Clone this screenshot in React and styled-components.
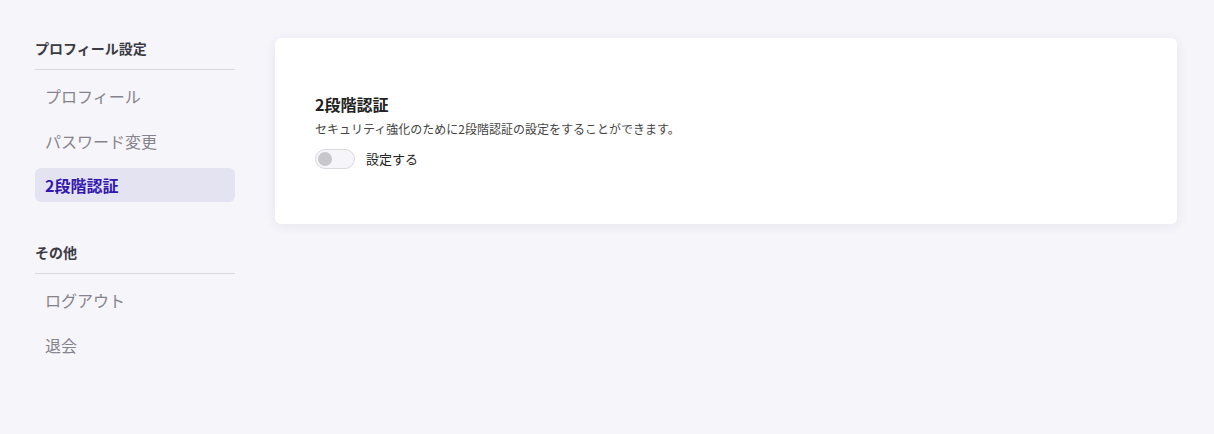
import { useState } from 'react';
import styled, { createGlobalStyle } from 'styled-components';

const GlobalStyle = createGlobalStyle`
    html, body {
        margin: 0;
        padding: 0;
        background: #f6f5fa;
        font-family: "Noto Sans CJK JP", "Noto Sans", sans-serif;
    }
`

const menu = [
    {
        title: 'プロフィール設定',
        items: ['プロフィール', 'パスワード変更', '2段階認証'],
    },
    {
        title: 'その他',
        items: ['ログアウト', '退会'],
    },
];

const App = () => {

    const [active, setActive] = useState('2段階認証');
    const [enabled, setEnabled] = useState(false);

    return (
        <Page>
            <GlobalStyle />
            <Sidebar>
                {menu.map((section) => (
                    <Section key={section.title}>
                        <SectionTitle>{section.title}</SectionTitle>
                        <NavList>
                            {section.items.map((item) => (
                                <NavItem
                                key={item}
                                $active={active === item}
                                onClick={() => setActive(item)}
                                >{item}</NavItem>
                            ))}
                        </NavList>
                    </Section>
                ))}
            </Sidebar>
            <Card>
                <Title>2段階認証</Title>
                <Desc>セキュリティ強化のために2段階認証の設定をすることができます。</Desc>
                <ToggleRow onClick={() => setEnabled(!enabled)}>
                    <Switch $on={enabled}><Knob $on={enabled} /></Switch>
                    <span>設定する</span>
                </ToggleRow>
            </Card>
        </Page>
    )
}

const Page = styled.div`
    display: flex;
    align-items: flex-start;
    gap: 40px;
    padding: 38px 37px 40px 35px;
    min-height: 434px;
    box-sizing: border-box;
`

const Sidebar = styled.nav`
    width: 200px;
    flex-shrink: 0;
    display: flex;
    flex-direction: column;
    gap: 40px;
`

const Section = styled.div`
    display: flex;
    flex-direction: column;
`

const SectionTitle = styled.div`
    font-size: 14px;
    font-weight: 700;
    color: #3b3b45;
    line-height: 20px;
    padding-bottom: 11px;
    border-bottom: 1px solid #d9d8df;
    margin-bottom: 9px;
`

const NavList = styled.div`
    display: flex;
    flex-direction: column;
    gap: 10.5px;
`

const NavItem = styled.div`
    font-size: 16px;
    line-height: 34px;
    height: 34px;
    padding: 0 10px;
    border-radius: 6px;
    cursor: pointer;
    color: ${(p) => (p.$active ? '#3318b0' : '#85848c')};
    font-weight: ${(p) => (p.$active ? 700 : 400)};
    background: ${(p) => (p.$active ? '#e4e3f1' : 'transparent')};
`

const Card = styled.section`
    flex: 1;
    background: #fff;
    border-radius: 6px;
    box-shadow: 0 2px 12px rgba(60, 50, 120, 0.08);
    padding: 54px 40px 55.5px;
`

const Title = styled.h2`
    margin: 0;
    font-size: 16px;
    font-weight: 700;
    color: #222;
    line-height: 24px;
`

const Desc = styled.p`
    margin: 4px 0 10.5px;
    font-size: 12px;
    color: #444;
    line-height: 18px;
`

const ToggleRow = styled.label`
    display: flex;
    align-items: center;
    gap: 11px;
    font-size: 13px;
    color: #222;
    cursor: pointer;
`

const Switch = styled.span`
    width: 40px;
    height: 20px;
    box-sizing: border-box;
    border-radius: 10px;
    border: 1px solid #d8d8de;
    background: ${(p) => (p.$on ? '#3318b0' : '#f6f5fa')};
    display: flex;
    align-items: center;
    padding: 0 2px;
`

const Knob = styled.span`
    width: 14px;
    height: 14px;
    border-radius: 50%;
    background: ${(p) => (p.$on ? '#fff' : '#c8c8cc')};
    margin-left: ${(p) => (p.$on ? '20px' : '0')};
`

export default App;
